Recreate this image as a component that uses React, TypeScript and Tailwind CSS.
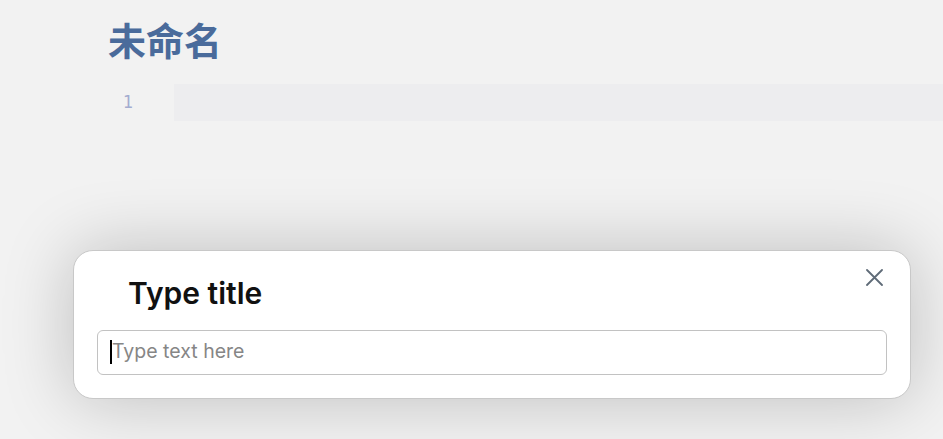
const App = () => (
  <div className="relative h-[439px] w-[943px] overflow-hidden bg-[#f2f2f2] font-['Inter','Liberation_Sans',sans-serif]">
    <div className="pl-[108px] pt-[13px]">
      <h1 className="font-['Noto_Sans_CJK_SC','Noto_Sans',sans-serif] text-[38px] font-bold leading-[52px] text-[#4a6b9b]">
        未命名
      </h1>
    </div>

    <div className="mt-[19px] flex h-[37px] items-center">
      <span className="w-[174px] pr-[41px] text-right font-['DejaVu_Sans_Mono',monospace] text-[17px] text-[#a3acd0]">
        1
      </span>
      <div className="h-full flex-1 bg-[#ededef]" />
    </div>

    <div className="absolute left-[73px] top-[250px] h-[149px] w-[838px] rounded-[20px] border border-[#c8c8c8] bg-white shadow-[0_0_70px_rgba(0,0,0,0.22)]">
      <button className="absolute right-[27px] top-[18px] text-[#5f6b78]">
        <svg width="17" height="17" viewBox="0 0 17 17" fill="none" stroke="currentColor" strokeWidth="1.8" strokeLinecap="round">
          <path d="M1 1L16 16M16 1L1 16" />
        </svg>
      </button>
      <h2 className="pl-[54px] pt-[24px] text-[30px] font-semibold leading-[36px] text-[#111]">
        Type title
      </h2>
      <div className="mx-[23px] mt-[19px] flex h-[45px] items-center rounded-[6px] border border-[#c2c2c2] px-[12px]">
        <span className="mb-[1px] h-[24px] w-[2px] bg-black" />
        <span className="mb-[1px] text-[19.5px] text-[#868686]">Type text here</span>
      </div>
    </div>
  </div>
);

export default App;
